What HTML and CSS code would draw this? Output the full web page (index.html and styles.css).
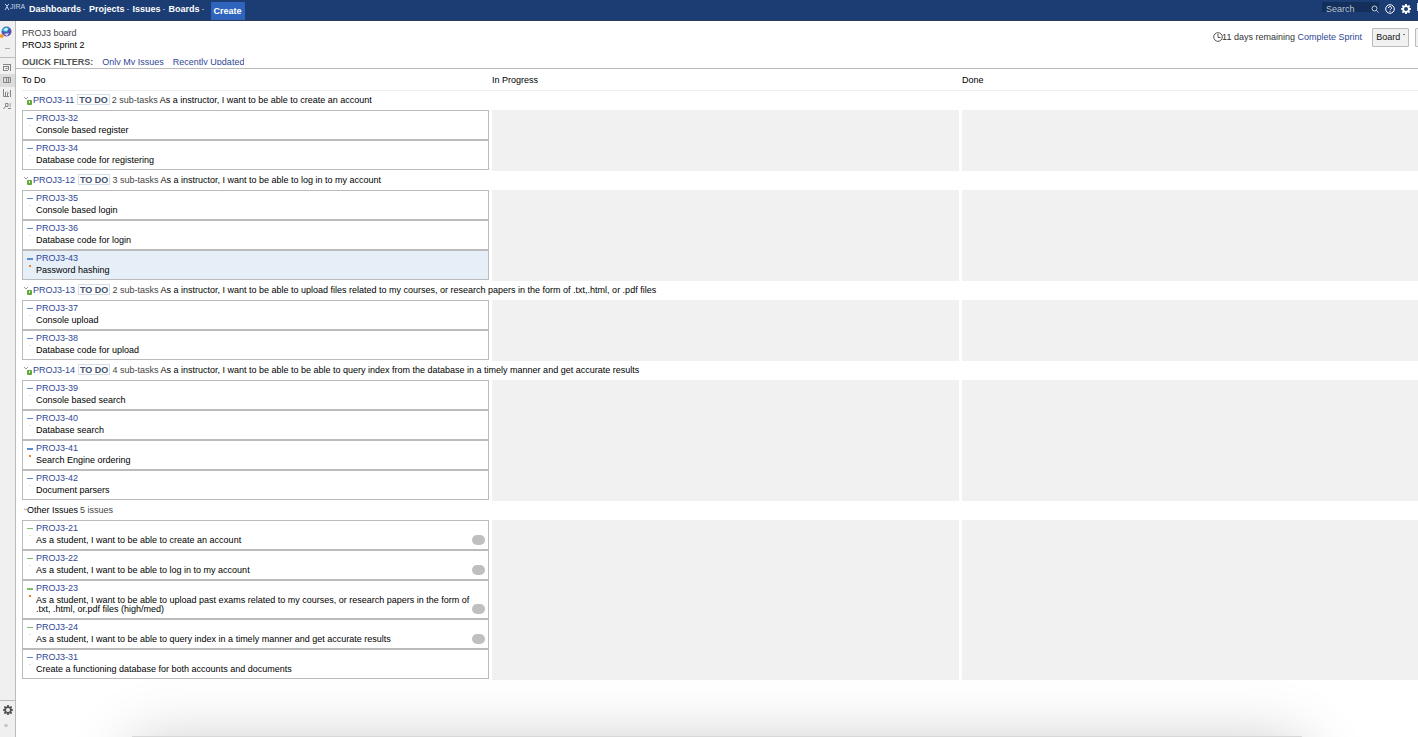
FILE: index.html
```html
<!DOCTYPE html>
<html lang="en">
<head>
<meta charset="utf-8">
<title>PROJ3 board - JIRA</title>
<link rel="stylesheet" href="styles.css">
</head>
<body>
<svg class="defs" aria-hidden="true">
  <symbol id="gear" viewBox="0 0 16 16"><path fill="currentColor" fill-rule="evenodd" d="M6.7 0h2.6l.4 2.3 1.2.5 2-1.4 1.8 1.8-1.4 2 .5 1.2 2.2.3v2.6l-2.2.4-.5 1.2 1.4 2-1.8 1.8-2-1.4-1.2.5L9.3 16H6.7l-.4-2.2-1.2-.5-2 1.4-1.8-1.8 1.4-2-.5-1.2L0 9.3V6.7l2.2-.3.5-1.2-1.4-2 1.8-1.8 2 1.4 1.2-.5zM8 4.800a3.200 3.200 0 1 0 0 6.400 3.200 3.200 0 0 0 0-6.400z"/></symbol>
  <symbol id="story" viewBox="0 0 9 9"><path d="M0 1l2 2 2-2" fill="none" stroke="#888" stroke-width=".8"/><rect x="3" y="4" width="5" height="5" rx="1" fill="#63a83c"/><path d="M5 5h1v2H5z" fill="#e3f2d8"/></symbol>
</svg>
<header class="topbar">
  <a class="logo" href="#"><svg viewBox="0 0 6 8"><path d="M1 1l2 2 2-2M1 7l2-3 2 3M3 3v2" fill="none" stroke="#c5d3e8"/></svg>JIRA</a>
  <nav class="menu">
    <a href="#">Dashboards</a><a href="#">Projects</a><a href="#">Issues</a><a href="#">Boards</a>
  </nav>
  <button class="create">Create</button>
  <div class="tools">
    <label class="search"><input type="text" placeholder="Search" aria-label="Search"><svg viewBox="0 0 8 8"><circle cx="3.500" cy="3.500" r="2.500"/><path d="M5.300 5.300L7.500 7.500"/></svg></label>
    <button class="tool" aria-label="Help"><svg viewBox="0 0 10 10"><circle cx="5" cy="5" r="4.300" fill="none" stroke="currentColor"/><path d="M3.500 4a1.500 1.500 0 1 1 2.200 1.300Q5 5.600 5 6.200M5 7v1" fill="none" stroke="currentColor"/></svg></button>
    <button class="tool" aria-label="Settings"><svg><use href="#gear"/></svg></button>
    <button class="profile" aria-label="Profile"></button>
  </div>
</header>
<div class="shell">
  <aside class="sidebar">
    <a class="avatar" href="#" aria-label="Project"><svg viewBox="0 0 12 13"><circle cx="6.500" cy="5.500" r="5" fill="#5355b5"/><path d="M2 5a4.500 4.500 0 0 1 7-3L7 6z" fill="#28c5dc"/><path d="M4 3l3-1 1 2-3 1z" fill="#e9faff"/><path d="M4 8l5-1-2 3z" fill="#d6dcff"/><circle cx="1.800" cy="10" r="2" fill="#f59a33"/></svg></a>
    <a class="dots" href="#" aria-label="More"></a>
    <nav class="side-nav">
      <a href="#" aria-label="Backlog"><svg viewBox="0 0 8 8"><path d="M0 1.500h5M0 3.500h5M.5 4v3.500M0 7.500h5M2.500 5.500h2M5 1.500h3M7.500 2v6M5.500 3v4"/></svg></a>
      <a class="current" href="#" aria-label="Active sprints"><svg viewBox="0 0 8 8"><path d="M.5 1.500h7v5h-7zM3.500 1.500v5M5.500 1.500v5"/></svg></a>
      <a href="#" aria-label="Reports"><svg viewBox="0 0 8 8"><path d="M.5 0v7.500H6M2.500 3v4M4.500 4v3M4 2.500l2 2M7.500 1v7"/></svg></a>
      <a href="#" aria-label="Search"><svg viewBox="0 0 8 8"><path d="M2.500 4.500v-3H5v3H2.500L.5 7M6.500 2H8M6.500 4H8M5 6.500h3"/></svg></a>
    </nav>
    <div class="side-foot">
      <button aria-label="Project settings"><svg><use href="#gear"/></svg></button>
      <button aria-label="Expand">»</button>
    </div>
  </aside>
  <main class="main">
    <section class="board-head">
      <div class="titles">
        <div class="board-name">PROJ3 board</div>
        <div>PROJ3 Sprint 2</div>
        <div class="filters"><b>QUICK FILTERS:</b><a href="#">Only My Issues</a><a href="#">Recently Updated</a></div>
      </div>
      <div class="actions">
        <svg class="clock" viewBox="0 0 10 10"><circle cx="5" cy="5" r="4.300"/><path d="M5 2v3.500h2.500"/></svg>
        <span class="remaining">11 days remaining <a href="#">Complete Sprint</a></span>
        <button class="btn board-btn">Board <i></i></button>
        <button class="btn" aria-label="Hide header"></button>
      </div>
    </section>
    <div class="board">
      <div class="columns names"><span>To Do</span><span>In Progress</span><span>Done</span></div>

      <section class="lane">
        <h2><svg><use href="#story"/></svg><a href="#">PROJ3-11</a><em>TO DO</em><small>2 sub-tasks</small><span>As a instructor, I want to be able to create an account</span></h2>
        <div class="columns">
          <div class="cards">
            <article class="card task"><a href="#">PROJ3-32</a><p>Console based register</p></article>
            <article class="card task"><a href="#">PROJ3-34</a><p>Database code for registering</p></article>
          </div><div class="cell"></div><div class="cell"></div>
        </div>
      </section>

      <section class="lane">
        <h2><svg><use href="#story"/></svg><a href="#">PROJ3-12</a><em>TO DO</em><small>3 sub-tasks</small><span>As a instructor, I want to be able to log in to my account</span></h2>
        <div class="columns">
          <div class="cards">
            <article class="card task"><a href="#">PROJ3-35</a><p>Console based login</p></article>
            <article class="card task"><a href="#">PROJ3-36</a><p>Database code for login</p></article>
            <article class="card task major selected"><a href="#">PROJ3-43</a><p>Password hashing</p></article>
          </div><div class="cell"></div><div class="cell"></div>
        </div>
      </section>

      <section class="lane">
        <h2><svg><use href="#story"/></svg><a href="#">PROJ3-13</a><em>TO DO</em><small>2 sub-tasks</small><span>As a instructor, I want to be able to upload files related to my courses, or research papers in the form of .txt,.html, or .pdf files</span></h2>
        <div class="columns">
          <div class="cards">
            <article class="card task"><a href="#">PROJ3-37</a><p>Console upload</p></article>
            <article class="card task"><a href="#">PROJ3-38</a><p>Database code for upload</p></article>
          </div><div class="cell"></div><div class="cell"></div>
        </div>
      </section>

      <section class="lane">
        <h2><svg><use href="#story"/></svg><a href="#">PROJ3-14</a><em>TO DO</em><small>4 sub-tasks</small><span>As a instructor, I want to be able to be able to query index from the database in a timely manner and get accurate results</span></h2>
        <div class="columns">
          <div class="cards">
            <article class="card task"><a href="#">PROJ3-39</a><p>Console based search</p></article>
            <article class="card task"><a href="#">PROJ3-40</a><p>Database search</p></article>
            <article class="card task major"><a href="#">PROJ3-41</a><p>Search Engine ordering</p></article>
            <article class="card task"><a href="#">PROJ3-42</a><p>Document parsers</p></article>
          </div><div class="cell"></div><div class="cell"></div>
        </div>
      </section>

      <section class="lane other">
        <h2><svg viewBox="0 0 4 9"><path d="M0 3.500l2 1.500 2-1.500" fill="none" stroke="#777"/></svg><span>Other Issues</span><small>5 issues</small></h2>
        <div class="columns">
          <div class="cards">
            <article class="card story"><a href="#">PROJ3-21</a><p>As a student, I want to be able to create an account</p><i class="estimate"></i></article>
            <article class="card story"><a href="#">PROJ3-22</a><p>As a student, I want to be able to log in to my account</p><i class="estimate"></i></article>
            <article class="card story major"><a href="#">PROJ3-23</a><p>As a student, I want to be able to upload past exams related to my courses, or research papers in the form of .txt, .html, or.pdf files (high/med)</p><i class="estimate"></i></article>
            <article class="card story"><a href="#">PROJ3-24</a><p>As a student, I want to be able to query index in a timely manner and get accurate results</p><i class="estimate"></i></article>
            <article class="card task"><a href="#">PROJ3-31</a><p>Create a functioning database for both accounts and documents</p></article>
          </div><div class="cell"></div><div class="cell"></div>
        </div>
      </section>
    </div>
  </main>
</div>
<div class="dock-shadow"></div>
</body>
</html>
```
FILE: styles.css
```css
* { box-sizing: border-box; }
body {
  margin: 0;
  height: 100vh;
  overflow: hidden;
  display: flex;
  flex-direction: column;
  background: #fff;
  color: #000;
  font: 9px/12px "Liberation Sans", Arial, sans-serif;
}
a { color: #2f4796; text-decoration: none; }
button { font: inherit; color: inherit; border: 0; padding: 0; background: none; }
.defs { display: none; }

.topbar {
  flex: none;
  height: 21px;
  display: flex;
  align-items: flex-start;
  background: #1b3d73;
  border-bottom: 1px solid #2b3d5b;
  color: #fff;
}
.topbar a { color: #fff; }
.topbar .logo {
  display: flex;
  align-items: center;
  width: 29px;
  padding: 1px 0 0 4px;
  color: #c5d3e8;
  font-size: 7px;
}
.logo svg { width: 6px; height: 8px; }
.menu { display: flex; gap: 4px; padding-top: 3px; font-weight: bold; }
.menu a { display: flex; align-items: center; gap: 2px; }
.menu a::after { content: ""; width: 2px; height: 1px; background: #8ba0c2; }
.create {
  height: 18px;
  margin: 2px 0 0 7px;
  padding: 0 3px;
  background: #2f64bd;
  color: #fff;
  font-weight: bold;
}
.tools { margin-left: auto; display: flex; }
.search {
  display: flex;
  width: 57px;
  height: 10px;
  margin: 2px 6px 0 0;
  background: #142f59;
}
.search input {
  width: 46px;
  height: 12px;
  border: 0;
  padding: 2px 0 0 4px;
  background: none;
  color: #fff;
  font: inherit;
  line-height: 9px;
  clip-path: inset(0 0 2px 0);
}
.search input::placeholder { color: #b9c5d8; }
.search svg { flex: none; width: 8px; height: 8px; margin: 3px 0 0 3px; overflow: visible; fill: none; stroke: #c5cfdf; }
.tool { width: 10px; height: 10px; margin: 4px 6px 0 0; color: #fff; }
.tool svg { display: block; width: 10px; height: 10px; }
.profile { width: 1px; height: 8px; margin-top: 3px; background: #d7deea; }

.shell { flex: 1; min-height: 0; display: flex; }
.sidebar {
  flex: none;
  width: 16px;
  display: flex;
  flex-direction: column;
  background: #f0f0f0;
  border-right: 1px solid #bbb;
}
.avatar { height: 18px; padding-top: 5px; }
.avatar svg { display: block; width: 12px; height: 13px; }
.dots { height: 19px; padding: 9px 0 0 5px; border-bottom: 1px solid #bbb; }
.dots::after { content: ""; display: block; width: 5px; border-top: 1px solid #aaa; }
.side-nav { padding-top: 3px; }
.side-nav a { display: block; height: 13px; padding: 2px 0 0 3px; }
.side-nav .current { background: #dcdcdc; }
.side-nav svg { display: block; width: 8px; height: 8px; fill: none; stroke: #858585; }
.side-foot {
  margin-top: auto;
  height: 37px;
  padding: 4px 0 0 3px;
  display: flex;
  flex-direction: column;
  align-items: flex-start;
  gap: 5px;
  border-top: 1px solid #bbb;
  color: #555;
}
.side-foot svg { display: block; width: 10px; height: 10px; }
.side-foot button:last-child { color: #999; font-size: 7px; padding-left: 1px; }

.main { flex: 1; min-width: 0; overflow: hidden; }
.board-head {
  display: flex;
  justify-content: space-between;
  height: 48px;
  padding: 6px 0 0 6px;
  border-bottom: 1px solid #bbb;
}
.board-name { color: #444; }
.filters { display: flex; gap: 9px; height: 9px; margin-top: 5px; overflow: hidden; }
.filters b { color: #555; }
.actions { display: flex; align-items: center; height: 20px; margin-right: -12px; }
.clock { width: 10px; height: 10px; fill: none; stroke: #555; margin-right: -1px; }
.remaining { color: #333; margin-right: 10px; }
.btn {
  width: 15px;
  height: 19px;
  border: 1px solid #bbb;
  border-radius: 1px;
  background: #f1f1f1;
  color: #111;
}
.board-btn { width: 37px; margin-right: 6px; }
.board-btn i { display: inline-block; width: 2px; height: 6px; border-top: 1px solid #777; }

.board { margin: 0 -11px 0 6px; }
.columns { display: grid; grid-template-columns: repeat(3, 1fr); gap: 3px; }
.names { height: 22px; padding-top: 5px; border-bottom: 1px solid #eee; }
.cards { min-width: 0; padding-bottom: 1px; }
.cell { background: #f1f1f1; }
.lane h2 {
  height: 19px;
  margin: 0;
  padding: 0 0 2px 2px;
  display: flex;
  align-items: center;
  font-size: 9px;
  font-weight: normal;
  white-space: nowrap;
}
.lane h2 svg { width: 9px; height: 9px; margin-top: 2px; }
.lane h2 em {
  margin: 0 2px 0 3px;
  padding: 0 1px;
  height: 11px;
  line-height: 10px;
  border: 1px solid #d5dde8;
  color: #42526e;
  font-style: normal;
  font-weight: bold;
}
.lane h2 small { color: #444; font-size: 9px; margin-right: 2px; }
.lane.other h2 svg { width: 3px; margin-top: 0; }
.lane.other h2 small { margin-left: 2px; }

.card {
  position: relative;
  padding: 3px 18px 4px 13px;
  border: 1px solid #bbb;
  background: #fff;
  line-height: 9px;
}
.card a { display: block; margin-bottom: 3px; }
.card p { margin: 0; }
.card::before, .card::after { content: ""; position: absolute; }
.card::before { left: 4px; top: 7px; width: 6px; height: 1px; background: #5d8fce; }
.card::after { left: 6px; top: 14px; width: 2px; height: 1px; background: #fbdcc0; }
.card.story::before { background: #82bd67; }
.card.major::before { height: 2px; }
.card.major::after { height: 2px; background: #ee7f33; }
.card.selected { background: #e6eef8; }
.estimate {
  position: absolute;
  right: 3px;
  bottom: 4px;
  width: 13px;
  height: 10px;
  border-radius: 5px;
  background: #bfbfbf;
}

.dock-shadow {
  position: fixed;
  left: 132px;
  right: 116px;
  bottom: -199px;
  height: 200px;
  background: #d8d8d8;
  box-shadow: 0 8px 60px rgba(0, 0, 0, .23);
  pointer-events: none;
}
```
